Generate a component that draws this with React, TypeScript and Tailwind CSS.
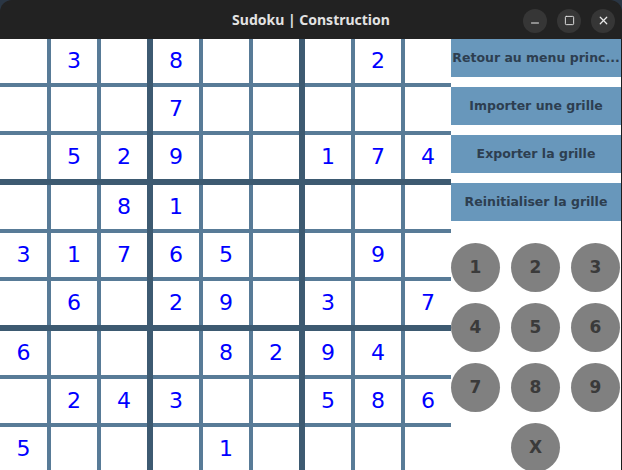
import { Minus, Square, X } from "lucide-react";

const grid = [
  "_3_8___2_",
  "___7_____",
  "_529__174",
  "__81_____",
  "31765__9_",
  "_6_29_3_7",
  "6___8294_",
  "_243__586",
  "5___1____",
];

const actions = [
  "Retour au menu princ...",
  "Importer une grille",
  "Exporter la grille",
  "Reinitialiser la grille",
];

const pad = ["1", "2", "3", "4", "5", "6", "7", "8", "9"];

function Box({ br, bc }: { br: number; bc: number }) {
  const cells = [];
  for (let r = 0; r < 3; r++) {
    for (let c = 0; c < 3; c++) {
      const v = grid[br * 3 + r][bc * 3 + c];
      cells.push(
        <div
          key={`${r}-${c}`}
          className="bg-white flex items-center justify-center text-[22px] text-[#0000ff] leading-none"
        >
          {v === "_" ? "" : v}
        </div>
      );
    }
  }
  return (
    <div
      className={
        bc === 0
          ? "grid grid-cols-[47px_46px_46px] grid-rows-[44px_44px_44px] gap-[4px] bg-[#587b97]"
          : "grid grid-cols-[46px_46px_46px] grid-rows-[44px_44px_44px] gap-[4px] bg-[#587b97]"
      }
    >
      {cells}
    </div>
  );
}

export default function App() {
  return (
    <div
      className="w-[622px] h-[470px] overflow-hidden bg-[#2a3644] flex flex-col"
      style={{ fontFamily: '"DejaVu Sans", sans-serif' }}
    >
      {/* Title bar */}
      <div className="h-[39px] shrink-0 rounded-t-[12px] bg-[#222222] grid grid-cols-[1fr_auto_1fr] items-center">
        <div />
        <span className="text-[14px] font-bold text-[#e2e2e2] font-['Noto_Sans',sans-serif]">
          Sudoku | Construction
        </span>
        <div className="flex justify-end gap-[10px] pr-[7px] pt-[2px]">
          <button className="w-[24px] h-[24px] rounded-full bg-[#363636] flex items-center justify-center text-[#e8e8e8]">
            <Minus className="w-[12px] h-[12px] translate-y-[2px]" strokeWidth={2} />
          </button>
          <button className="w-[24px] h-[24px] rounded-full bg-[#363636] flex items-center justify-center text-[#e8e8e8]">
            <Square className="w-[11px] h-[11px]" strokeWidth={2} />
          </button>
          <button className="w-[24px] h-[24px] rounded-full bg-[#363636] flex items-center justify-center text-[#e8e8e8]">
            <X className="w-[13px] h-[13px]" strokeWidth={2.2} />
          </button>
        </div>
      </div>

      {/* Body */}
      <div className="flex flex-1 min-h-0 bg-white border-r border-[#1c1c1c]">
        {/* Sudoku board */}
        <div className="w-[451px] shrink-0">
          <div className="grid grid-cols-[147px_146px_146px] grid-rows-[140px_140px_140px] gap-[6px] bg-[#3d5a71]">
            {[0, 1, 2].map((br) =>
              [0, 1, 2].map((bc) => <Box key={`${br}${bc}`} br={br} bc={bc} />)
            )}
          </div>
        </div>

        {/* Side panel */}
        <div className="flex-1 flex flex-col">
          <div className="flex flex-col gap-[10px]">
            {actions.map((a) => (
              <button
                key={a}
                className="h-[38px] bg-[#6897bb] text-[#2d3e50] text-[12.5px] font-bold whitespace-nowrap overflow-hidden flex items-center justify-center"
              >
                {a}
              </button>
            ))}
          </div>

          <div className="grid grid-cols-[49px_49px_49px] auto-rows-[49px] gap-[11px] mt-[22px]">
            {pad.map((n) => (
              <div
                key={n}
                className="rounded-full bg-[#808080] flex items-center justify-center text-[17px] font-bold text-[#3a3a3a]"
              >
                {n}
              </div>
            ))}
            <div />
            <div className="rounded-full bg-[#808080] flex items-center justify-center text-[17px] font-bold text-[#3a3a3a]">
              X
            </div>
          </div>
        </div>
      </div>
    </div>
  );
}
